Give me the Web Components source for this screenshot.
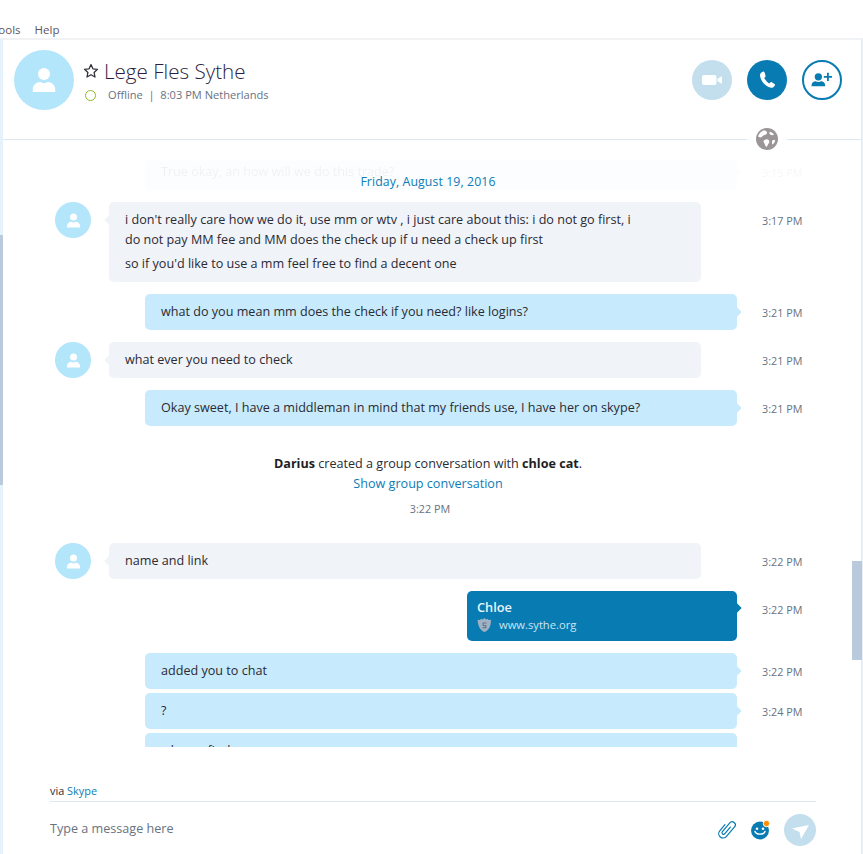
<!DOCTYPE html>
<html>
<head>
<meta charset="utf-8">
<title>Skype</title>
<style>
  html, body { margin: 0; height: 100%; overflow: hidden; background: #fff; }
  body { font-family: "Open Sans", "Noto Sans", sans-serif; font-size: 12px; color: #2a2a33; }
</style>
</head>
<body>
<skype-app>
  <menu-bar slot="menu"></menu-bar>
  <chat-header slot="header" name="Lege Fles Sythe" status="Offline | 8:03 PM Netherlands"></chat-header>

  <chat-message ghost mine time="3:15 PM">True okay, an how will we do this trade?</chat-message>
  <chat-message avatar time="3:17 PM" style="margin-top:12px">
    <div style="line-height:20px">i don't really care how we do it, use mm or wtv , i just care about this: i do not go first, i<br>do not pay MM fee and MM does the check up if u need a check up first</div>
    <div style="line-height:20px;margin-top:4px">so if you'd like to use a mm feel free to find a decent one</div>
  </chat-message>
  <chat-message mine time="3:21 PM" style="margin-top:12px">what do you mean mm does the check if you need? like logins?</chat-message>
  <chat-message avatar time="3:21 PM" style="margin-top:12px">what ever you need to check</chat-message>
  <chat-message mine time="3:21 PM" style="margin-top:12px">Okay sweet, I have a middleman in mind that my friends use, I have her on skype?</chat-message>
  <system-note time="3:22 PM"><b>Darius</b> created a group conversation with <b>chloe cat</b>.</system-note>
  <chat-message avatar time="3:22 PM">name and link</chat-message>
  <link-card title="Chloe" url="www.sythe.org" time="3:22 PM" style="margin-top:12px"></link-card>
  <chat-message mine time="3:22 PM" style="margin-top:12px">added you to chat</chat-message>
  <chat-message mine time="3:24 PM" style="margin-top:4px">?</chat-message>
  <chat-message mine time="3:24 PM" style="margin-top:4px">when u find</chat-message>

  <message-box slot="compose"></message-box>
</skype-app>

<script>
const PERSON = `<circle cx="12" cy="8" r="4"/><path d="M4.500 20v-1.600C4.500 15 7 13.600 9.400 13.400c1.600 1 3.600 1 5.200 0C17 13.600 19.500 15 19.500 18.400V20z"/>`

class SkypeApp extends HTMLElement {
  constructor() {
    super()
    this.attachShadow({ mode: 'open' })
    this.shadowRoot.innerHTML = `
    <style>
      :host { display: flex; flex-direction: column; width: 863px; height: 854px; position: relative; overflow: hidden; }
      .frame { flex: 1; min-height: 0; display: flex; flex-direction: column; border-top: 2px solid #f0f2f4; border-left: 3px solid #e6f2fb; border-right: 2px solid #e3eef6; }
      .wrap { flex: none; height: 607px; position: relative; }
      .list { height: 607px; box-sizing: border-box; overflow: hidden; padding: 14px 0 0 52px; }
      .date { position: absolute; top: 34px; left: 0; right: 8px; text-align: center; color: #0d7cb6; font-size: 12.3px; line-height: 16px; letter-spacing: .1px; }
      .bar-left { position: absolute; left: 0; top: 235px; width: 3px; height: 250px; background: #b8cadb; }
      .bar-right { position: absolute; right: 1px; top: 561px; width: 10px; height: 99px; background: #b8cadb; }
    </style>
    <slot name="menu"></slot>
    <div class="frame">
      <slot name="header"></slot>
      <div class="wrap">
        <div class="list"><slot></slot></div>
        <div class="date">Friday, August 19, 2016</div>
      </div>
      <slot name="compose"></slot>
    </div>
    <div class="bar-left"></div>
    <div class="bar-right"></div>`
  }
}

class MenuBar extends HTMLElement {
  constructor() {
    super()
    this.attachShadow({ mode: 'open' })
    this.shadowRoot.innerHTML = `
    <style>
      :host { display: flex; height: 38px; box-sizing: border-box; padding: 22px 0 0 0; gap: 14px; font-size: 11.5px; line-height: 16px; color: #5c5560; overflow: hidden; }
      span:first-of-type { margin-left: -8px; }
    </style>
    <span>Tools</span><span>Help</span>`
  }
}

class ChatHeader extends HTMLElement {
  constructor() {
    super()
    this.attachShadow({ mode: 'open' })
    this.shadowRoot.innerHTML = `
    <style>
      :host { display: flex; align-items: flex-start; height: 100px; box-sizing: border-box; padding: 10px 0 0 11px; position: relative; border-bottom: 1px solid #dfe7ee; }
      .avatar { width: 60px; height: 60px; border-radius: 50%; background: #b3e5fb; display: flex; align-items: center; justify-content: center; flex: none; }
      .avatar svg { width: 36px; height: 36px; fill: #fff; }
      .info { margin-left: 10px; padding-top: 6px; min-width: 0; flex: 1; }
      .title { display: flex; align-items: center; gap: 5px; height: 30px; margin-left: -1px; }
      .title svg { width: 16px; height: 16px; flex: none; }
      .name { font-size: 20.6px; font-weight: 300; color: #2a1d40; line-height: 30px; white-space: nowrap; }
      .status { display: flex; align-items: center; font-size: 11.1px; line-height: 16px; color: #68727f; margin-top: 1px; }
      .dot { width: 9px; height: 9px; border: 1.5px solid #8dbb1d; border-radius: 50%; margin: 0 12px 0 1px; flex: none; }
      .actions { display: flex; gap: 15px; padding: 10px 19px 0 0; }
      .btn { width: 40px; height: 40px; border-radius: 50%; box-sizing: border-box; display: flex; align-items: center; justify-content: center; }
      .video { background: #c3dfed; }
      .call { background: #077bb2; }
      .add { border: 2px solid #077bb2; }
      .globe { position: absolute; right: 74px; bottom: -11px; background: #fff; padding: 0 9px; height: 22px; display: flex; }
      .globe svg { width: 22px; height: 22px; }
    </style>
    <div class="avatar"><svg viewBox="0 0 24 24">${PERSON}</svg></div>
    <div class="info">
      <div class="title">
        <svg viewBox="0 0 16 16"><path d="M8 1.600l1.900 4.200 4.600.5-3.400 3.100.9 4.600L8 11.700 4 14l.9-4.600L1.500 6.300l4.600-.5z" fill="none" stroke="#33333d" stroke-width="1.300" stroke-linejoin="round"/></svg>
        <span class="name">${this.getAttribute('name')}</span>
      </div>
      <div class="status"><span class="dot"></span><span>${this.getAttribute('status').replace('|', '&nbsp;|&nbsp;')}</span></div>
    </div>
    <div class="actions">
      <div class="btn video"><svg width="20" height="10" viewBox="0 0 20 10"><rect x="0" y="0" width="14.500" height="10" rx="2" fill="#fff"/><path d="M15.500 4L20 1v8l-4.500-3z" fill="#fff"/></svg></div>
      <div class="btn call"><svg width="20" height="20" viewBox="0 0 20 20"><path d="M6.300 1.500C4.800 2 2.800 3.300 3 5.600c.3 3 1.800 5.700 3.900 8 2 2.100 4.500 3.800 7.300 4.200 1.800.2 3-1.200 3.700-2.600.2-.5.100-1-.4-1.300l-2.700-1.700c-.5-.3-1-.2-1.400.2l-1 1.100c-1.500-.7-4.300-3.500-5.200-5.500l1-1c.4-.4.500-.9.300-1.400L7.400 2c-.2-.5-.7-.7-1.100-.5z" fill="#fff"/></svg></div>
      <div class="btn add"><svg width="24" height="20" viewBox="0 0 26 22"><g fill="#077bb2"><circle cx="9" cy="7.500" r="4"/><path d="M1.500 18v-1.300c0-2.800 2.500-4 4.500-4.200 1.800 1 4.200 1 6 0 2 .2 4.500 1.400 4.500 4.200V18z"/><path d="M18.500 3h2v3.500H24v2h-3.500V12h-2V8.500H15v-2h3.500z"/></g></svg></div>
    </div>
    <div class="globe"><svg viewBox="0 0 24 24"><circle cx="12" cy="12" r="12" fill="#9b9597"/><path d="M9 2.500c2 .8 3.200 1.500 3 3-.2 1.600-2 2-3.500 2.500-1.300.5-1.700 2-3 2.200C4 10.400 2.800 9.600 2.300 9 3.300 6 5.800 3.400 9 2.500zM15 4c1.600.2 3.600 1.300 4.700 3.200-1 .7-2.600.8-3.700.2-1-.5-1.800-1.700-1-3.400zM11 12.500c2-.5 3.500.8 3.500 2.400 0 1.300-.8 2-1.500 3-.5.900-.9 2.300-1.800 2.800-1-.8-1.300-2.300-1.800-3.500-.5-1.200-1.500-2-1.200-3 .3-1 1.500-1.500 2.800-1.700zM18 13.500c1-.5 2.300-.4 3 .1-.5 1.700-1.400 3.200-2.700 4.300-1-.6-1.300-3.400-.3-4.400z" fill="#fff"/></svg></div>`
  }
}

class ChatMessage extends HTMLElement {
  constructor() {
    super()
    this.attachShadow({ mode: 'open' })
    const mine = this.hasAttribute('mine')
    const avatar = this.hasAttribute('avatar')
    const bg = mine ? '#c7ebfc' : '#f0f3f8'
    this.shadowRoot.innerHTML = `
    <style>
      :host { display: grid; grid-template-columns: 36px 592px 1fr; column-gap: 18px; align-items: start; flex: none; }
      :host([mine]) { grid-template-columns: 72px 592px 1fr; }
      :host([mine]) .av { visibility: hidden; }
      :host([avatar]) .time { margin-left: 43px; }
      :host([ghost]) { opacity: .06; -webkit-mask-image: linear-gradient(transparent 5px, #000 7px); mask-image: linear-gradient(transparent 5px, #000 7px); }
      .av { width: 36px; height: 36px; border-radius: 50%; background: #b3e5fb; display: flex; align-items: center; justify-content: center; }
      .av svg { width: 21px; height: 21px; fill: #fff; }
      .bubble { position: relative; background: ${bg}; border-radius: 5px; padding: 8px 16px; font-size: 12.6px; line-height: 20px; color: #2a2a33; min-height: 20px; }
      .bubble::after { content: ""; position: absolute; top: 14px; width: 8px; height: 8px; background: ${bg}; transform: rotate(45deg); ${mine ? 'right: -3px' : 'left: -3px'}; }
      .time { font-size: 10.8px; line-height: 16px; color: #68727f; margin-top: 11px; margin-left: 7px; white-space: nowrap; }
    </style>
    <div class="av">${avatar ? `<svg viewBox="0 0 24 24">${PERSON}</svg>` : ''}</div>
    <div class="bubble"><slot></slot></div>
    <div class="time">${this.getAttribute('time')}</div>`
  }
}

class SystemNote extends HTMLElement {
  constructor() {
    super()
    this.attachShadow({ mode: 'open' })
    this.shadowRoot.innerHTML = `
    <style>
      :host { display: flex; flex-direction: column; align-items: center; width: 746px; padding: 28px 0 26px; text-align: center; }
      .text { font-size: 12.6px; line-height: 20px; color: #2a2a33; }
      ::slotted(b) { font-weight: 700; color: #1e1e24; }
      .link { font-size: 12.6px; line-height: 20px; color: #0d7cb6; }
      .time { font-size: 10.8px; line-height: 16px; color: #68727f; margin: 7px 0 0 4px; }
    </style>
    <div class="text"><slot></slot></div>
    <div class="link">Show group conversation</div>
    <div class="time">${this.getAttribute('time')}</div>`
  }
}

class LinkCard extends HTMLElement {
  constructor() {
    super()
    this.attachShadow({ mode: 'open' })
    this.shadowRoot.innerHTML = `
    <style>
      :host { display: flex; flex: none; align-items: flex-start; }
      .card { position: relative; margin-left: 412px; width: 270px; height: 50px; box-sizing: border-box; background: #077bb2; border-radius: 5px; padding: 7px 10px; color: #fff; }
      .card::after { content: ""; position: absolute; top: 13px; right: -3px; width: 8px; height: 8px; background: #077bb2; transform: rotate(45deg); }
      .title { font-size: 12.8px; font-weight: 600; line-height: 18px; color: #e8f4fa; }
      .url { display: flex; align-items: center; gap: 7px; font-size: 11.2px; line-height: 18px; color: #cde6f3; }
      .url svg { width: 15px; height: 16px; flex: none; }
      .time { font-size: 10.8px; line-height: 16px; color: #68727f; margin: 11px 0 0 25px; white-space: nowrap; }
    </style>
    <div class="card">
      <div class="title">${this.getAttribute('title')}</div>
      <div class="url"><svg viewBox="0 0 15 16"><path d="M7.500 1l1.500 1.500 1.500-.7 1 1.200 2.500-.3C14 8 12.500 13 7.500 15 2.500 13 1 8 .5 2.700L3 3l1-1.200 1.500.7z" fill="#9fb1c2"/><path d="M9.500 6H6.200v2.500h2.600v2.200H5.600" fill="none" stroke="#647a90" stroke-width="1.200"/></svg><span>${this.getAttribute('url')}</span></div>
    </div>
    <div class="time">${this.getAttribute('time')}</div>`
  }
}

class MessageBox extends HTMLElement {
  constructor() {
    super()
    this.attachShadow({ mode: 'open' })
    this.shadowRoot.innerHTML = `
    <style>
      :host { display: block; padding: 0 45px 0 47px; flex: 1; min-height: 0; }
      .via { height: 55px; box-sizing: border-box; padding-top: 36px; border-bottom: 1px solid #dfe7ee; font-size: 10.9px; line-height: 16px; color: #2a2a33; }
      .via span { color: #0d7cb6; }
      .row { display: flex; align-items: center; height: 52px; }
      .hint { flex: 1; font-size: 12.6px; line-height: 20px; color: #68727f; padding-top: 2px; }
      .icons { display: flex; align-items: center; margin-top: 4px; }
      .clip { width: 18px; height: 20px; margin-right: 15px; margin-top: -2px; }
      .smile { width: 20px; height: 20px; margin-right: 13px; }
      .send { width: 32px; height: 32px; border-radius: 50%; background: #c3dfed; display: flex; align-items: center; justify-content: center; }
      .send svg { margin-top: 3px; }
    </style>
    <div class="via">via <span>Skype</span></div>
    <div class="row">
      <div class="hint">Type a message here</div>
      <div class="icons">
        <svg class="clip" viewBox="0 0 18 20"><path transform="translate(9 10) rotate(40)" d="M1.400-3.500V5A1.600 1.600 0 0 1-1.800 5V-6.500A3.100 3.100 0 0 1 4.400-6.500V6A4.400 4.400 0 0 1-4.400 6V-2" fill="none" stroke="#077bb2" stroke-width="1.200" stroke-linecap="round"/></svg>
        <svg class="smile" viewBox="0 0 20 20"><circle cx="9" cy="10.500" r="9" fill="#077bb2"/><circle cx="6" cy="8.800" r="1.300" fill="#fff"/><circle cx="12" cy="8.800" r="1.300" fill="#fff"/><path d="M4 11.500c1 3.500 9 3.500 10 0" fill="none" stroke="#fff" stroke-width="1.400" stroke-linecap="round"/><circle cx="15.500" cy="3.500" r="3.200" fill="#ff8c00" stroke="#fff" stroke-width="1"/></svg>
        <div class="send"><svg width="17" height="14" viewBox="0 0 17 14"><path d="M0 3.500L17 0 9 14 7.500 7z" fill="#fff"/></svg></div>
      </div>
    </div>`
  }
}

customElements.define('skype-app', SkypeApp)
customElements.define('menu-bar', MenuBar)
customElements.define('chat-header', ChatHeader)
customElements.define('chat-message', ChatMessage)
customElements.define('system-note', SystemNote)
customElements.define('link-card', LinkCard)
customElements.define('message-box', MessageBox)
</script>
</body>
</html>
